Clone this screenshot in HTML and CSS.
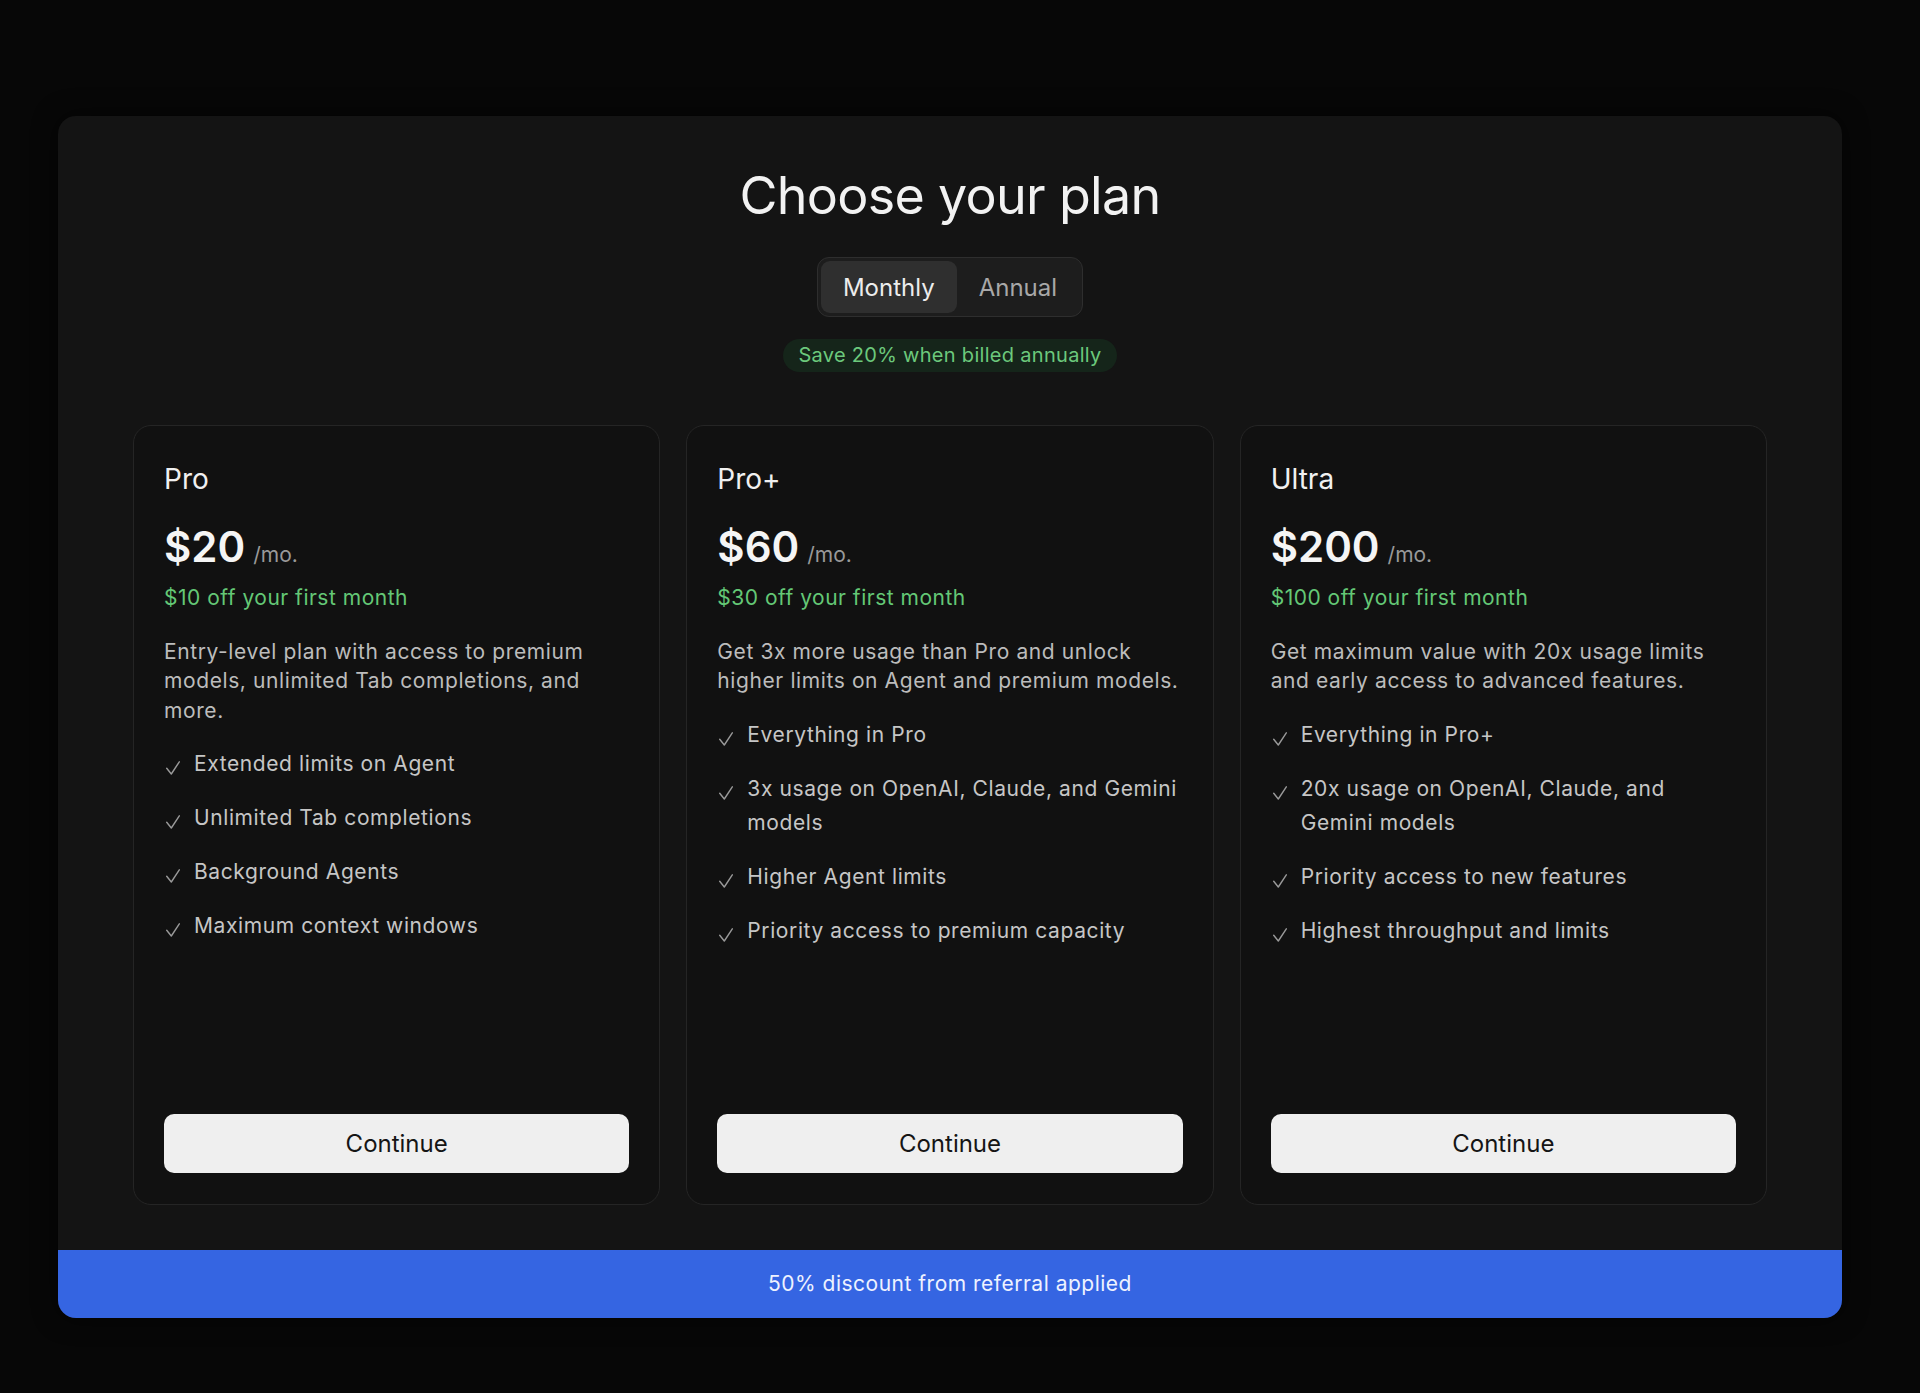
FILE: index.html
```html
<!DOCTYPE html>
<html lang="en">
<head>
    <meta charset="UTF-8">
    <meta name="viewport" content="width=device-width, initial-scale=1.0">
    <title>Choose your plan</title>
    <link rel="stylesheet" href="styles.css">
</head>
<body>
    <div class="plan-panel">
        <h1 class="panel-title">Choose your plan</h1>

        <div class="billing-toggle">
            <button class="toggle-option active">Monthly</button>
            <button class="toggle-option">Annual</button>
        </div>

        <div class="save-badge">Save 20% when billed annually</div>

        <div class="plan-grid">
            <div class="plan-card">
                <div class="plan-name">Pro</div>
                <div class="plan-price">$20<span class="per">/mo.</span></div>
                <div class="plan-promo">$10 off your first month</div>
                <p class="plan-desc">Entry-level plan with access to premium models, unlimited Tab completions, and more.</p>
                <ul class="feature-list">
                    <li><svg class="check" viewBox="0 0 14 14"><path d="M0.7 7.2 L5.3 13 L13.3 0.8"/></svg><span>Extended limits on Agent</span></li>
                    <li><svg class="check" viewBox="0 0 14 14"><path d="M0.7 7.2 L5.3 13 L13.3 0.8"/></svg><span>Unlimited Tab completions</span></li>
                    <li><svg class="check" viewBox="0 0 14 14"><path d="M0.7 7.2 L5.3 13 L13.3 0.8"/></svg><span>Background Agents</span></li>
                    <li><svg class="check" viewBox="0 0 14 14"><path d="M0.7 7.2 L5.3 13 L13.3 0.8"/></svg><span>Maximum context windows</span></li>
                </ul>
                <button class="continue-btn">Continue</button>
            </div>

            <div class="plan-card">
                <div class="plan-name">Pro+</div>
                <div class="plan-price">$60<span class="per">/mo.</span></div>
                <div class="plan-promo">$30 off your first month</div>
                <p class="plan-desc">Get 3x more usage than Pro and unlock higher limits on Agent and premium models.</p>
                <ul class="feature-list">
                    <li><svg class="check" viewBox="0 0 14 14"><path d="M0.7 7.2 L5.3 13 L13.3 0.8"/></svg><span>Everything in Pro</span></li>
                    <li><svg class="check" viewBox="0 0 14 14"><path d="M0.7 7.2 L5.3 13 L13.3 0.8"/></svg><span>3x usage on OpenAI, Claude, and Gemini models</span></li>
                    <li><svg class="check" viewBox="0 0 14 14"><path d="M0.7 7.2 L5.3 13 L13.3 0.8"/></svg><span>Higher Agent limits</span></li>
                    <li><svg class="check" viewBox="0 0 14 14"><path d="M0.7 7.2 L5.3 13 L13.3 0.8"/></svg><span>Priority access to premium capacity</span></li>
                </ul>
                <button class="continue-btn">Continue</button>
            </div>

            <div class="plan-card">
                <div class="plan-name">Ultra</div>
                <div class="plan-price">$200<span class="per">/mo.</span></div>
                <div class="plan-promo">$100 off your first month</div>
                <p class="plan-desc">Get maximum value with 20x usage limits and early access to advanced features.</p>
                <ul class="feature-list">
                    <li><svg class="check" viewBox="0 0 14 14"><path d="M0.7 7.2 L5.3 13 L13.3 0.8"/></svg><span>Everything in Pro+</span></li>
                    <li><svg class="check" viewBox="0 0 14 14"><path d="M0.7 7.2 L5.3 13 L13.3 0.8"/></svg><span>20x usage on OpenAI, Claude, and Gemini models</span></li>
                    <li><svg class="check" viewBox="0 0 14 14"><path d="M0.7 7.2 L5.3 13 L13.3 0.8"/></svg><span>Priority access to new features</span></li>
                    <li><svg class="check" viewBox="0 0 14 14"><path d="M0.7 7.2 L5.3 13 L13.3 0.8"/></svg><span>Highest throughput and limits</span></li>
                </ul>
                <button class="continue-btn">Continue</button>
            </div>
        </div>

        <div class="referral-bar">50% discount from referral applied</div>
    </div>
</body>
</html>
```

FILE: styles.css
```css
* {
    box-sizing: border-box;
}

body {
    margin: 0;
    padding: 116px 78px 0 58px;
    background-color: #070707;
    font-family: Inter, "Noto Sans", sans-serif;
    min-height: 100vh;
}

.plan-panel {
    background-color: #141414;
    border-radius: 18px;
    overflow: hidden;
    padding: 54px 75px 0;
    display: flex;
    flex-direction: column;
    align-items: center;
    box-shadow: 0 0 24px rgba(0, 0, 0, 0.6);
}

.panel-title {
    margin: 0;
    font-size: 52px;
    line-height: 52px;
    font-weight: 400;
    color: #f2f2f2;
    letter-spacing: -0.7px;
}

.billing-toggle {
    margin-top: 35px;
    display: flex;
    padding: 3px;
    background-color: #1d1d1d;
    border: 1px solid #2e2e2e;
    border-radius: 12px;
}

.toggle-option {
    height: 52px;
    padding: 0 22px;
    border: none;
    border-radius: 9px;
    background: transparent;
    color: #a8a8a8;
    font-family: inherit;
    font-size: 24px;
    cursor: pointer;
}

.toggle-option.active {
    background-color: #2f2f2f;
    color: #ececec;
}

.save-badge {
    margin-top: 22px;
    height: 33px;
    line-height: 33px;
    padding: 0 15px;
    border-radius: 17px;
    background-color: #15251a;
    color: #6cc97c;
    font-size: 20px;
    letter-spacing: 0.3px;
}

.plan-grid {
    margin-top: 53px;
    width: 100%;
    display: grid;
    grid-template-columns: repeat(3, 1fr);
    gap: 26px;
}

.plan-card {
    height: 780px;
    background-color: #111111;
    border: 1px solid #252525;
    border-radius: 18px;
    padding: 36px 30px 31px;
    display: flex;
    flex-direction: column;
}

.plan-name {
    font-size: 28px;
    line-height: 34px;
    color: #f0f0f0;
}

.plan-price {
    margin-top: 26px;
    font-size: 42px;
    line-height: 50px;
    font-weight: 600;
    color: #f5f5f5;
}

.plan-price .per {
    margin-left: 8px;
    font-size: 21px;
    font-weight: 400;
    color: #999999;
}

.plan-promo {
    margin-top: 4px;
    font-size: 21px;
    line-height: 28px;
    color: #64c876;
    letter-spacing: 0.5px;
}

.plan-desc {
    margin: 25px 0 0;
    font-size: 21px;
    line-height: 29.4px;
    color: #bcbcbc;
    letter-spacing: 0.6px;
}

.feature-list {
    list-style: none;
    margin: 22px 0 0;
    padding: 0;
    display: flex;
    flex-direction: column;
    gap: 20px;
}

.feature-list li {
    display: flex;
    align-items: flex-start;
    gap: 14px;
    font-size: 21px;
    line-height: 34px;
    color: #c6c6c6;
    letter-spacing: 0.6px;
}

.check {
    flex: none;
    width: 14px;
    height: 14px;
    margin-top: 14px;
    margin-left: 2px;
    fill: none;
    stroke: #9a9a9a;
    stroke-width: 1.4;
    stroke-linecap: round;
    stroke-linejoin: round;
}

.continue-btn {
    margin-top: auto;
    height: 59px;
    border: none;
    border-radius: 10px;
    background-color: #efefef;
    color: #151515;
    font-family: inherit;
    font-size: 24px;
    cursor: pointer;
}

.referral-bar {
    margin-top: 45px;
    align-self: stretch;
    margin-left: -75px;
    margin-right: -75px;
    height: 68px;
    line-height: 68px;
    background-color: #3565e2;
    color: #eef2ff;
    font-size: 21px;
    letter-spacing: 0.5px;
    text-align: center;
}
```
